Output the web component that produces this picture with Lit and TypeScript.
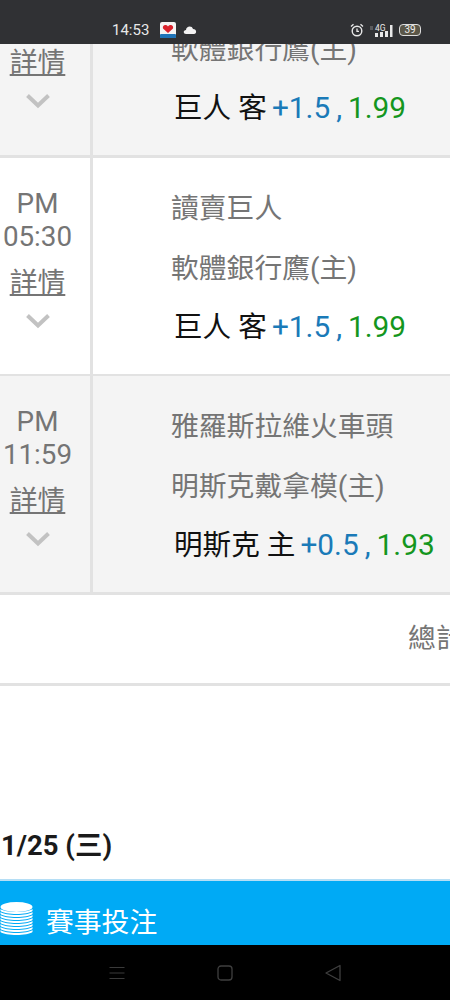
import { LitElement, html, css, svg } from "lit";
import { customElement } from "lit/decorators.js";

const chevron = html`<svg class="chev" width="26" height="16" viewBox="0 0 26 16"><path d="M2.5 2.5 L13 12.5 L23.5 2.5" fill="none" stroke="#c2c2c2" stroke-width="4"/></svg>`;

@customElement("app-root")
export class AppRoot extends LitElement {
  static styles = css`
    :host { display: block; width: 450px; height: 1000px; overflow: hidden; background: #fff;
      font-family: Roboto, "Noto Sans CJK TC", sans-serif; color: #757575; font-size: 27.8px; }
    .status { height: 44px; background: #303134; display: flex; align-items: flex-start; padding: 22px 0 0 112px; box-sizing: border-box; color: #e8e8e8; font-size: 15px; line-height: 16px; }
    .status .time { width: 48px; }
    .status svg { display: block; }
    .status .cloud { margin-left: 7px; margin-top: 3px; }
    .status .right { margin-left: auto; display: flex; margin-right: 29px; gap: 5px; align-items: center; height: 16px; }
    .batt { width: 20px; height: 10px; border: 1px solid #ddd; border-radius: 4px; background: #5a5648; font-size: 10px; line-height: 10px; text-align: center; color: #eee; }
    .row { display: flex; border-bottom: 2px solid #e2e2e2; height: 216px; overflow: hidden; }
    .row.first { height: 111px; border-bottom-width: 3px; align-items: flex-start; }
    .row.last { border-bottom-width: 3px; }
    .row.grey { background: #f4f4f4; }
    .left { width: 93px; height: 216px; flex: none; box-sizing: border-box; border-right: 3px solid #e2e2e2; display: flex; flex-direction: column; align-items: center; padding: 29px 15px 0 0; line-height: 33px; white-space: nowrap; }
    .row.first .left { margin-top: -106px; height: 322px; }
    .row.first .right-cell { margin-top: -105px; flex: none; }
    .detail { text-decoration: underline; margin-top: 11px; line-height: 38px; }
    .chev { display: block; margin-top: 11px; }
    .right-cell { flex: 1; padding: 33px 0 0 78px; height: 216px; box-sizing: border-box; white-space: nowrap; }
    .team { height: 59px; line-height: 38px; }
    .team.top { margin-top: -1px; height: 60px; }
    .pick { display: flex; align-items: baseline; margin-left: 3px; line-height: 38px; white-space: nowrap; font-size: 29.8px; margin-top: -1px; }
    .name { color: #111; margin-right: 5px; font-size: 28.6px; }
    .handicap { color: #1a7ab8; }
    .comma { color: #1a7ab8; margin: 0 6px; }
    .odds { color: #14961e; }
    .total { height: 88px; border-bottom: 3px solid #e2e2e2; padding-left: 408px; white-space: nowrap; overflow: hidden; line-height: 88px; }
    .gap { height: 192px; box-sizing: border-box; padding-top: 143px; padding-left: 1px; font-weight: 700; color: #1a1a1a; font-size: 27.5px; line-height: 34px; }
    .bar { height: 66px; box-sizing: border-box; background: #00aaf5; border-top: 2px solid #b5def5; display: flex; align-items: center; color: #fff; font-size: 27.8px; padding: 13px 0 0 46px; position: relative; margin-top: 1px; }
    .bar svg { position: absolute; left: 0; top: 21px; }
    .nav { height: 55px; background: #000; display: flex; align-items: center; padding-left: 109px; gap: 92px; }
    .nav svg { display: block; }
  `;

  row(time: string, a: string, b: string, pick: string, hc: string, odds: string, cls = "") {
    const [ap, t] = time.split(" ");
    return html`<div class="row ${cls}">
      <div class="left"><div>${ap}</div><div>${t}</div><div class="detail">詳情</div>${chevron}</div>
      <div class="right-cell">
        <div class="team top">${a}</div>
        <div class="team">${b}</div>
        <div class="pick"><span class="name">${pick}</span><span class="handicap">${hc}</span><span class="comma">,</span><span class="odds">${odds}</span></div>
      </div>
    </div>`;
  }

  render() {
    const stack = [0, 3, 6, 9, 12, 15, 18, 21].map(
      (y) => svg`<path d="M0 ${7 + y} V${9 + y} C5 ${13 + y} 27 ${13 + y} 32 ${9 + y} V${7 + y} C27 ${11 + y} 5 ${11 + y} 0 ${7 + y}Z" fill="#fff"/>`
    );
    return html`
      <div class="status">
        <span class="time">14:53</span>
        <svg width="16" height="16" viewBox="0 0 16 16"><rect width="16" height="16" rx="2" fill="#f4f4f4"/><rect y="12" width="16" height="4" rx="1" fill="#1f74b8"/><path d="M8 11 L3 6.500 C2 3 6 2 8 4.500 C10 2 14 3 13 6.500Z" fill="#d9222c"/></svg>
        <svg class="cloud" width="14" height="9" viewBox="0 0 14 9"><path d="M3 9 C0 9 0 5 3 5 C3 1 9 0 10 4 C14 4 14 9 11 9Z" fill="#f2f2f2"/></svg>
        <div class="right">
          <svg width="14" height="14" viewBox="0 0 14 14"><circle cx="7" cy="8" r="4.800" fill="none" stroke="#e8e8e8" stroke-width="1.400"/><path d="M7 5.500V8.300H9M1 3.500L3.500 1.200M13 3.500L10.500 1.200" fill="none" stroke="#e8e8e8" stroke-width="1.300"/></svg>
          <svg width="25" height="15" viewBox="0 0 25 15"><path d="M1 4h3M1 6h3" stroke="#999" stroke-width="0.800"/><rect x="6" y="10" width="3" height="4" fill="#e8e8e8"/><rect x="11" y="9" width="3" height="5" fill="#e8e8e8"/><rect x="16" y="8" width="3" height="6" fill="#e8e8e8"/><rect x="21" y="2" width="2.500" height="12" fill="#e8e8e8"/><text x="6" y="7.500" font-size="8.500" fill="#e8e8e8" font-family="Roboto">4G</text></svg>
          <div class="batt">39</div>
        </div>
      </div>
      ${this.row("PM 05:30", "讀賣巨人", "軟體銀行鷹(主)", "巨人 客", "+1.5", "1.99", "first grey")}
      ${this.row("PM 05:30", "讀賣巨人", "軟體銀行鷹(主)", "巨人 客", "+1.5", "1.99")}
      ${this.row("PM 11:59", "雅羅斯拉維火車頭", "明斯克戴拿模(主)", "明斯克 主", "+0.5", "1.93", "grey last")}
      <div class="total">總計</div>
      <div class="gap">1/25 (三)</div>
      <div class="bar"><svg width="33" height="34" viewBox="0 0 32 34"><ellipse cx="16" cy="5" rx="16" ry="5" fill="#fff"/>${stack}</svg>賽事投注</div>
      <div class="nav">
        <svg width="16" height="14" viewBox="0 0 16 14"><path d="M0.500 1.500H15.500M0.500 7H15.500M0.500 12.500H15.500" stroke="#3a3a3a" stroke-width="1.200"/></svg>
        <svg width="16" height="16" viewBox="0 0 16 16"><rect x="1" y="1" width="14" height="14" rx="3" fill="none" stroke="#3f3f3f" stroke-width="1.300"/></svg>
        <svg width="16" height="18" viewBox="0 0 16 18"><path d="M1 9 L15 1.500 V16.500Z" fill="none" stroke="#3f3f3f" stroke-width="1.300" stroke-linejoin="round"/></svg>
      </div>
    `;
  }
}
